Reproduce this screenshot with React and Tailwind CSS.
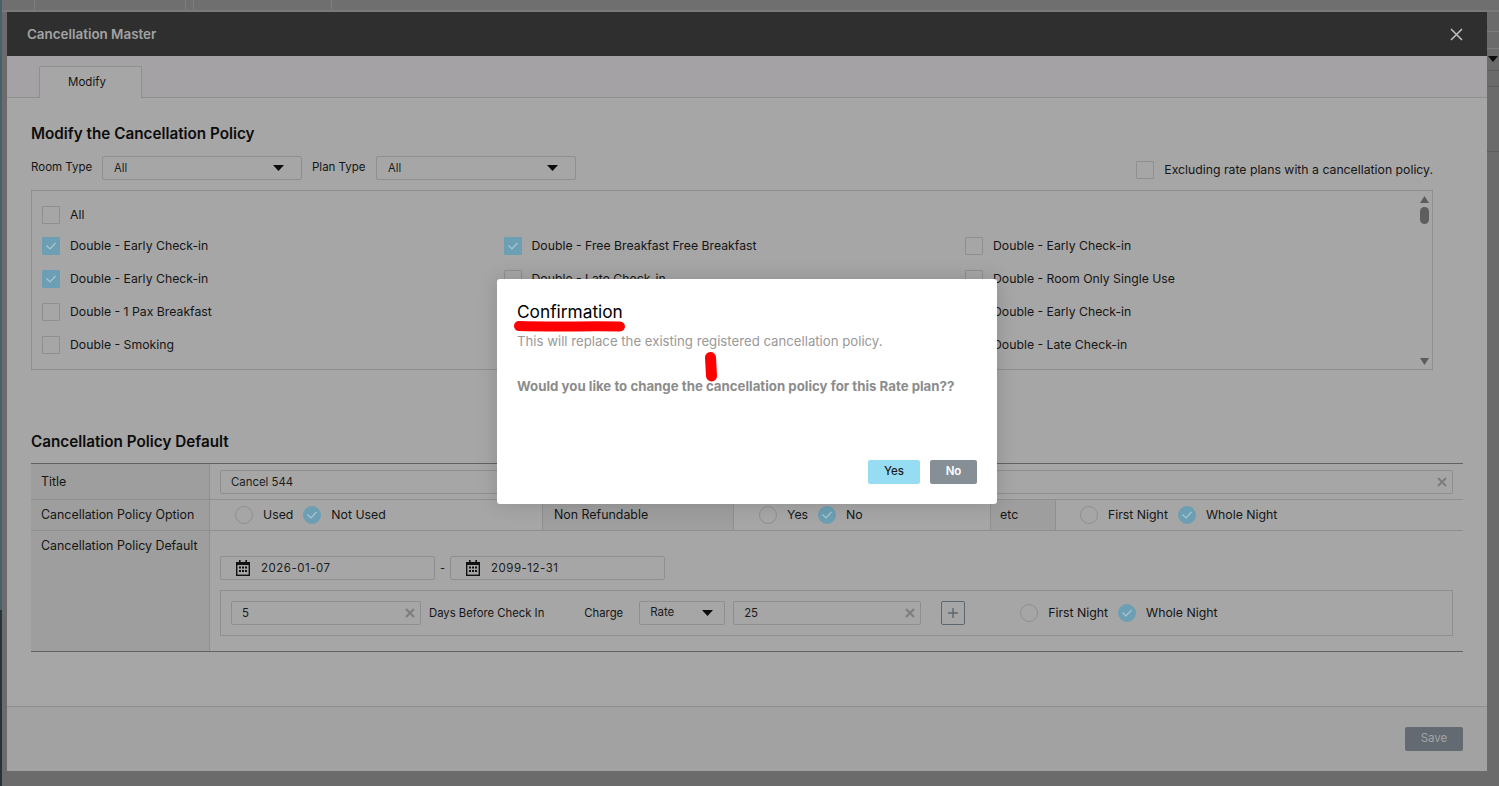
const font = { fontFamily: "Inter, sans-serif" };

function Check({ on, round }) {
  const shape = round ? "rounded-full" : "rounded-[1px]";
  return (
    <span
      className={`w-[18px] h-[18px] shrink-0 flex items-center justify-center border ${shape} ${
        on ? "bg-[#6c9fb3] border-[#6c9fb3]" : "border-[#8f8f8f]"
      }`}
    >
      {on && (
        <svg width="12" height="10" viewBox="0 0 12 10" fill="none">
          <path d="M1.5 4.5 L5 8 L10.5 2" stroke="#a9c7d2" strokeWidth="1.2" />
        </svg>
      )}
    </span>
  );
}

function ListItem({ on, label, className = "" }) {
  return (
    <div className={`flex items-center gap-[10px] w-[461.5px] text-[12.25px] leading-[18px] text-[#151515] ${className}`}>
      <Check on={on} />
      <span>{label}</span>
    </div>
  );
}

function Radios({ a, b, className = "" }) {
  return (
    <div className={`flex items-center text-[12.3px] text-[#151515] ${className}`}>
      <Check round />
      <span className="ml-[10px] mr-[10px]">{a}</span>
      <Check round on />
      <span className="ml-[10px]">{b}</span>
    </div>
  );
}

function Caret() {
  return (
    <svg width="11" height="6" viewBox="0 0 11 6">
      <path d="M0 0 H11 L5.5 6 Z" fill="#0c0c0c" />
    </svg>
  );
}

function Select({ value, className = "" }) {
  return (
    <div className={`h-6 border border-[#8f8f8f] rounded-[2px] flex items-center justify-between pl-[11px] pr-[17px] text-[11.2px] text-[#1c1c1c] ${className}`}>
      <span>{value}</span>
      <Caret />
    </div>
  );
}

function Clear() {
  return (
    <svg width="10" height="10" viewBox="0 0 10 10">
      <path d="M1 1 L9 9 M9 1 L1 9" stroke="#7d7d7d" strokeWidth="2" />
    </svg>
  );
}

function Input({ value, className = "" }) {
  return (
    <div className={`h-6 border border-[#8f8f8f] rounded-[2px] flex items-center justify-between pl-[10px] pr-[5px] text-[11.4px] text-[#1c1c1c] ${className}`}>
      <span className="pt-px">{value}</span>
      <Clear />
    </div>
  );
}

function Calendar() {
  return (
    <svg width="14" height="16" viewBox="0 0 14 16">
      <path d="M3 0 h1.6 v2 h4.8 v-2 h1.6 v2 h3 v14 h-14 v-14 h3 z" fill="#111" />
      <rect x="1.4" y="5" width="11.2" height="9.6" fill="#a6a6a6" />
      <path d="M3 6.6h2v2h-2z M6 6.6h2v2h-2z M9 6.6h2v2h-2z M3 10h2v2h-2z M6 10h2v2h-2z M9 10h2v2h-2z" fill="#111" />
    </svg>
  );
}

function DateInput({ value }) {
  return (
    <div className="w-[215px] h-6 border border-[#8f8f8f] rounded-[2px] flex items-center pl-[15px] gap-[11px] text-[11.5px] tracking-[0.5px] text-[#1c1c1c]">
      <Calendar />
      <span className="pt-px">{value}</span>
    </div>
  );
}

export default function App() {
  return (
    <div style={font} className="relative h-[786px] w-[1499px] overflow-hidden bg-[#6b6b6b]">
      {/* page behind the modal */}
      <div className="h-3 flex bg-[#6f6f6f] border-b-2 border-[#7a7a7a]">
        <div className="w-[34px] shrink-0" />
        <div className="w-[152px] border-x border-[#7d7d7d]" />
        <div className="w-[7px]" />
        <div className="w-[139px] border-x border-[#7d7d7d]" />
      </div>
      <div className="absolute left-0 top-0 h-[610px] w-[2px] bg-[#47616b]" />
      <div className="absolute left-0 top-[610px] bottom-0 w-[2px] bg-[#26343a]" />
      <div className="absolute right-0 top-[31px] w-3 h-px bg-[#7d7d7d]" />
      <div className="absolute right-0 top-[48px] w-3 h-px bg-[#7d7d7d]" />
      <div className="absolute right-0 top-[70px] w-3 h-px bg-[#5e5e5e]" />
      <div className="absolute right-0 top-[86px] w-3 h-px bg-[#5e5e5e]" />
      <div className="absolute right-0 top-[151px] w-3 h-px bg-[#5e5e5e]" />
      <div className="absolute right-[1px] top-[56px]">
        <svg width="10" height="6" viewBox="0 0 10 6"><path d="M0 0 H10 L5 6 Z" fill="#0c0c0c" /></svg>
      </div>

      {/* Cancellation Master modal */}
      <div className="ml-[7px] w-[1480px] h-[759px] bg-[#a6a6a6] rounded-b-[2px] flex flex-col">
        <div className="h-11 shrink-0 bg-[#2f2f2f] flex items-center justify-between pl-5 pr-[24px]">
          <span className="pt-px text-[13.4px] font-semibold text-[#a3a3a3]">Cancellation Master</span>
          <svg width="13" height="13" viewBox="0 0 13 13">
            <path d="M1 1 L12 12 M12 1 L1 12" stroke="#bdbdbd" strokeWidth="1.6" />
          </svg>
        </div>

        <div className="h-[42px] shrink-0 bg-[#a4a2a4] border-b border-[#8f8f8f] pl-8 pt-[10px]">
          <div className="w-[103px] h-[32px] pr-[7px] bg-[#a6a6a6] border border-b-0 border-[#8f8f8f] rounded-t-[2px] flex items-center justify-center text-[11.5px] text-[#151515]">
            Modify
          </div>
        </div>

        <div className="flex-1 pl-6 pr-6 pt-[26px]">
          <h2 className="text-[15.25px] leading-[20px] font-semibold text-[#0c0c0c]">Modify the Cancellation Policy</h2>

          <div className="mt-[12px] h-6 flex items-center text-[11.5px] text-[#151515]">
            <span className="w-[71px]">Room Type</span>
            <Select value="All" className="w-[200px]" />
            <span className="ml-[10px] w-[64px]">Plan Type</span>
            <Select value="All" className="w-[200px]" />
            <div className="ml-auto mr-[30px] mt-1 flex items-center gap-[10px] text-[12.25px]">
              <Check />
              <span>Excluding rate plans with a cancellation policy.</span>
            </div>
          </div>

          <div className="relative mt-[10px] w-[1402px] h-[180px] border border-[#8f8f8f] pl-[10px] pt-[15px]">
            <ListItem label="All" />
            <div className="mt-[13px] flex">
              <ListItem on label="Double - Early Check-in" />
              <ListItem on label="Double - Free Breakfast Free Breakfast" />
              <ListItem label="Double - Early Check-in" />
            </div>
            <div className="mt-[15px] flex">
              <ListItem on label="Double - Early Check-in" />
              <ListItem label="Double - Late Check-in" />
              <ListItem label="Double - Room Only Single Use" />
            </div>
            <div className="mt-[15px] flex">
              <ListItem label="Double - 1 Pax Breakfast" />
              <ListItem label="" />
              <ListItem label="Double - Early Check-in" />
            </div>
            <div className="mt-[15px] flex">
              <ListItem label="Double - Smoking" />
              <ListItem label="" />
              <ListItem label="Double - Late Check-in" />
            </div>

            {/* scrollbar */}
            <div className="absolute right-[3px] top-[5px] bottom-[4px] w-[9px] flex flex-col items-center justify-between">
              <div className="flex flex-col items-center gap-[4px]">
                <svg width="9" height="7" viewBox="0 0 9 7"><path d="M0 7 H9 L4.5 0 Z" fill="#5c5c5c" /></svg>
                <div className="w-[9px] h-[17px] rounded-full bg-[#5e5e5e]" />
              </div>
              <svg width="9" height="7" viewBox="0 0 9 7"><path d="M0 0 H9 L4.5 7 Z" fill="#5c5c5c" /></svg>
            </div>
          </div>

          <h2 className="mt-[62px] text-[15.25px] leading-[20px] font-semibold text-[#0c0c0c]">Cancellation Policy Default</h2>

          <div className="mt-[11px] border-y border-[#626262] text-[12.4px] text-[#151515]">
            <div className="h-[36px] flex border-b border-[#8f8f8f]">
              <div className="w-[179px] shrink-0 bg-[#9e9e9e] border-r border-[#8f8f8f] pl-[10px] pt-[2px] flex items-center">Title</div>
              <div className="flex-1 pl-[10px] pr-[10px] pt-[1px] flex items-center">
                <Input value="Cancel 544" className="w-full" />
              </div>
            </div>
            <div className="h-[31px] flex border-b border-[#8f8f8f]">
              <div className="w-[179px] shrink-0 bg-[#9e9e9e] border-r border-[#8f8f8f] pl-[10px] flex items-center">Cancellation Policy Option</div>
              <Radios a="Used" b="Not Used" className="w-[332px] pl-[25px]" />
              <div className="w-[192px] bg-[#9e9e9e] border-x border-[#8f8f8f] pl-[11px] flex items-center">Non Refundable</div>
              <Radios a="Yes" b="No" className="w-[256px] pl-[25px]" />
              <div className="w-[66px] bg-[#9e9e9e] border-x border-[#8f8f8f] pl-[9px] flex items-center">etc</div>
              <Radios a="First Night" b="Whole Night" className="pl-[24px]" />
            </div>
            <div className="h-[120px] flex">
              <div className="w-[179px] shrink-0 bg-[#9e9e9e] border-r border-[#8f8f8f] pl-[10px] pt-[6px]">Cancellation Policy Default</div>
              <div className="flex-1 pl-[10px] pr-[10px] pt-[25px]">
                <div className="flex items-center">
                  <DateInput value="2026-01-07" />
                  <span className="w-[15px] text-center text-[11px]">-</span>
                  <DateInput value="2099-12-31" />
                </div>
                <div className="mt-[10px] h-[46px] border border-[#8f8f8f] flex items-center pl-[10px]">
                  <Input value="5" className="w-[190px]" />
                  <span className="ml-2 text-[11.3px]">Days Before Check In</span>
                  <span className="ml-[40px] text-[11.3px]">Charge</span>
                  <Select value="Rate" className="ml-[16px] w-[86px] !pl-[10px] !pr-[11px] !text-[11.5px]" />
                  <Input value="25" className="ml-2 w-[188px]" />
                  <div className="ml-[20px] w-6 h-6 border border-[#5c6670] rounded-[2px] flex items-center justify-center">
                    <svg width="10" height="10" viewBox="0 0 10 10"><path d="M5 0 V10 M0 5 H10" stroke="#5c6670" strokeWidth="1.4" /></svg>
                  </div>
                  <Radios a="First Night" b="Whole Night" className="ml-[55px]" />
                </div>
              </div>
            </div>
          </div>
        </div>

        <div className="h-[65px] shrink-0 bg-[#a2a2a2] border-t border-[#8f8f8f] flex items-center justify-end pr-6">
          <button className="w-[58px] h-6 rounded-[2px] bg-[#646a71] text-[11.5px] text-[#a3a3a3]">Save</button>
        </div>
      </div>

      {/* Confirmation dialog */}
      <div className="absolute left-[497px] top-[279px] w-[500px] h-[225px] bg-white rounded-[3px] pl-5 pr-5 pt-[21px] flex flex-col shadow-[0_0_20px_rgba(0,0,0,0.15)]">
        <div className="text-[17.3px] leading-[24px] text-black">Confirmation</div>
        <div className="mt-[8px] text-[13.2px] leading-[18px] text-[#999999]">This will replace the existing registered cancellation policy.</div>
        <div className="mt-[27px] text-[13.26px] leading-[18px] font-bold text-[#8c8c8c]">Would you like to change the cancellation policy for this Rate plan??</div>
        <div className="mt-auto mb-5 flex justify-end gap-[10px]">
          <button className="w-[52px] h-6 rounded-[2px] bg-[#96dcf2] text-[11.5px] font-medium text-[#1c1c1c]">Yes</button>
          <button className="w-[47px] h-6 rounded-[2px] bg-[#868e96] text-[11.5px] font-semibold text-white">No</button>
        </div>
      </div>

      {/* red annotation marks */}
      <svg className="absolute left-0 top-0 pointer-events-none" width="1499" height="786">
        <path d="M519 326 C 550 327, 590 326, 620 326.5" stroke="#ff0000" strokeWidth="10" strokeLinecap="round" fill="none" />
        <path d="M710.5 357.5 L711.5 376" stroke="#ff0000" strokeWidth="11" strokeLinecap="round" fill="none" />
      </svg>
    </div>
  );
}
